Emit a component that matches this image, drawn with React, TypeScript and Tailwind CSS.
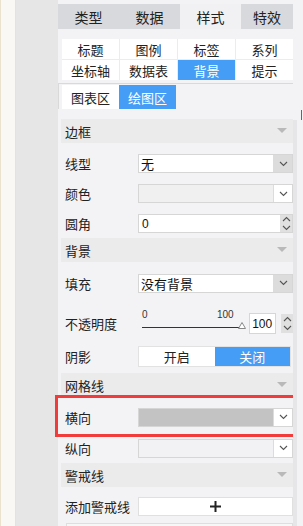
import React from "react"

const font = { fontFamily: '"Noto Sans CJK SC", "Liberation Sans", sans-serif' }
const latin = { fontFamily: '"Liberation Sans", sans-serif' }

const Chevron = ({ up = false }: { up?: boolean }) => (
  <svg width="9" height="6" viewBox="0 0 9 6" className={up ? "rotate-180" : ""}>
    <polyline points="1,1 4.5,4.5 8,1" fill="none" stroke="#555" strokeWidth="1.1" />
  </svg>
)

const Tri = () => (
  <svg width="10" height="6" viewBox="0 0 10 6">
    <polygon points="0,0 10,0 5,5" fill="#b9b9b9" />
  </svg>
)

const Header = ({ title, className = "" }: { title: string; className?: string }) => (
  <div className={"flex h-[24px] items-center justify-between bg-[#ebebeb] pl-[4px] pr-[6px] text-[13px] leading-none text-[#222] " + className}>
    <span>{title}</span>
    <Tri />
  </div>
)

const Label = ({ children }: { children: React.ReactNode }) => (
  <div className="w-[77px] shrink-0 pl-[4px] text-[13px] leading-none text-[#222]">{children}</div>
)

const Select = ({ value, bg = "bg-white", btn = "bg-[#dcdcdc]" }: { value?: string; bg?: string; btn?: string }) => (
  <div className={"flex h-[19px] flex-1 items-center border border-[#d6d6d6] " + bg}>
    <div className="flex-1 pl-[2px] text-[13px] leading-none text-[#111]">{value}</div>
    <div className={"flex h-full w-[19px] items-center justify-center border-l border-[#dcdcdc] " + btn}>
      <Chevron />
    </div>
  </div>
)

const Spin = () => (
  <div className="flex h-full w-[12px] flex-col items-center justify-center gap-[3px] bg-[#e0e0e0]">
    <Chevron up />
    <Chevron />
  </div>
)

export default function App() {
  const tabs = ["类型", "数据", "样式", "特效"]
  const sub = ["标题", "图例", "标签", "系列", "坐标轴", "数据表", "背景", "提示"]

  return (
    <div className="flex h-[526px] w-[303px] overflow-hidden" style={font}>
      <div className="w-[16px] shrink-0 border-l border-r border-[#ebe2cd] bg-[#f9f8f4]" />
      <div className="w-[42px] shrink-0 bg-[#e6e6e6]" />
      <div className="flex w-[245px] shrink-0 bg-[#f3f3f5]">
        <div className="w-[235px] shrink-0">
          {/* main tabs */}
          <div className="mt-[4px] flex h-[25px]">
            {tabs.map((t, i) => (
              <div
                key={t}
                className={
                  "flex items-center justify-center text-[14px] leading-none text-[#222] " +
                  (i === 3 ? "w-[52px] " : "w-[61px] ") +
                  (i === 2 ? "bg-[#f1f1f3]" : "bg-[#d8d9dc]")
                }
              >
                {t}
              </div>
            ))}
          </div>

          {/* sub tabs */}
          <div className="ml-[4px] mt-[10px] grid grid-cols-4 gap-[1px] bg-[#ececee]">
            {sub.map((s) => (
              <div
                key={s}
                className={
                  "flex h-[20px] items-center justify-center text-[13px] leading-none " +
                  (s === "背景" ? "bg-[#459df5] text-white" : "bg-white text-[#222]")
                }
              >
                {s}
              </div>
            ))}
          </div>
          <div className="mt-[3px] flex h-[26px] border-l border-t border-[#d9d9d9] pl-[3px] pt-[1px]">
            <div className="flex w-[57px] items-center justify-center bg-white text-[13px] leading-none text-[#222]">图表区</div>
            <div className="flex w-[57px] items-center justify-center bg-[#459df5] text-[13px] leading-none text-white">绘图区</div>
          </div>

          <div className="pl-[3px]">
            <Header title="边框" className="mt-[10px]" />
            <div className="mt-[11px] flex h-[19px] items-center">
              <Label>线型</Label>
              <Select value="无" />
            </div>
            <div className="mt-[11px] flex h-[19px] items-center">
              <Label>颜色</Label>
              <Select bg="bg-[#f0f0f0]" btn="bg-white" />
            </div>
            <div className="mt-[11px] flex h-[19px] items-center">
              <Label>圆角</Label>
              <div className="flex h-[19px] flex-1 items-center border border-[#d6d6d6] bg-white">
                <div className="flex-1 pl-[3px] text-[12px] leading-none text-[#111]" style={latin}>0</div>
                <Spin />
              </div>
            </div>

            <Header title="背景" className="mt-[5px]" />
            <div className="mt-[11px] flex h-[20px] items-center">
              <Label>填充</Label>
              <Select value="没有背景" />
            </div>
            <div className="mt-[20px] flex h-[21px] items-center">
              <Label>不透明度</Label>
              <div className="relative h-full w-[112px]" style={latin}>
                <span className="absolute left-[4px] top-[-3px] text-[10px] leading-none text-[#333]">0</span>
                <span className="absolute left-[79px] top-[-3px] text-[10px] leading-none text-[#333]">100</span>
                <div className="absolute left-[4px] top-[14px] h-[1px] w-[98px] bg-[#333]" />
                <svg className="absolute left-[100px] top-[9px]" width="8" height="7" viewBox="0 0 8 7">
                  <polygon points="4,0.5 7.5,6.5 0.5,6.5" fill="white" stroke="#888" strokeWidth="1" />
                </svg>
              </div>
              <div className="flex h-full w-[27px] items-center border border-[#d6d6d6] bg-white pl-[2px] text-[12px] leading-none text-[#111]" style={latin}>
                100
              </div>
              <div className="ml-[5px] h-[19px]">
                <Spin />
              </div>
            </div>
            <div className="mt-[12px] flex h-[21px] items-center">
              <Label>阴影</Label>
              <div className="mr-[2px] flex h-[21px] flex-1 border border-[#e2e2e2]">
                <div className="flex flex-1 items-center justify-center bg-white text-[13px] leading-none text-[#222]">开启</div>
                <div className="flex flex-1 items-center justify-center bg-[#459df5] text-[13px] leading-none text-white">关闭</div>
              </div>
            </div>

            <Header title="网格线" className="mt-[6px]" />
            <div className="relative -ml-[6px] -mr-[4px] -mt-[2px] flex h-[42px] items-center border-[3px] border-[#f23b3b] pl-[7px] pr-[1px] pt-[2px]">
              <div className="w-[73px] shrink-0 text-[13px] leading-none text-[#222]">横向</div>
              <Select bg="bg-[#c3c3c3]" btn="bg-white" />
            </div>
            <div className="mt-[2px] flex h-[18px] items-center">
              <Label>纵向</Label>
              <Select bg="bg-[#f2f2f4]" btn="bg-white" />
            </div>

            <Header title="警戒线" className="mt-[6px]" />
            <div className="mt-[10px] flex h-[19px] items-center">
              <Label>添加警戒线</Label>
              <div className="flex h-[19px] flex-1 items-center justify-center border border-[#e0e0e0] bg-white">
                <svg width="11" height="11" viewBox="0 0 11 11">
                  <path d="M5.5 0v11M0 5.5h11" stroke="#222" strokeWidth="2" />
                </svg>
              </div>
            </div>
            <div className="ml-[5px] mt-[7px] h-[20px] border border-[#dedede] bg-[#f7f7f8]" />
          </div>
        </div>
        <div className="relative flex-1">
          <div className="absolute left-[8px] top-[110px] h-[10px] w-[1px] bg-[#666]" />
          <div className="absolute bottom-0 left-0 top-[120px] w-[4px] bg-[#e6e6e8]" />
        </div>
      </div>
    </div>
  )
}
